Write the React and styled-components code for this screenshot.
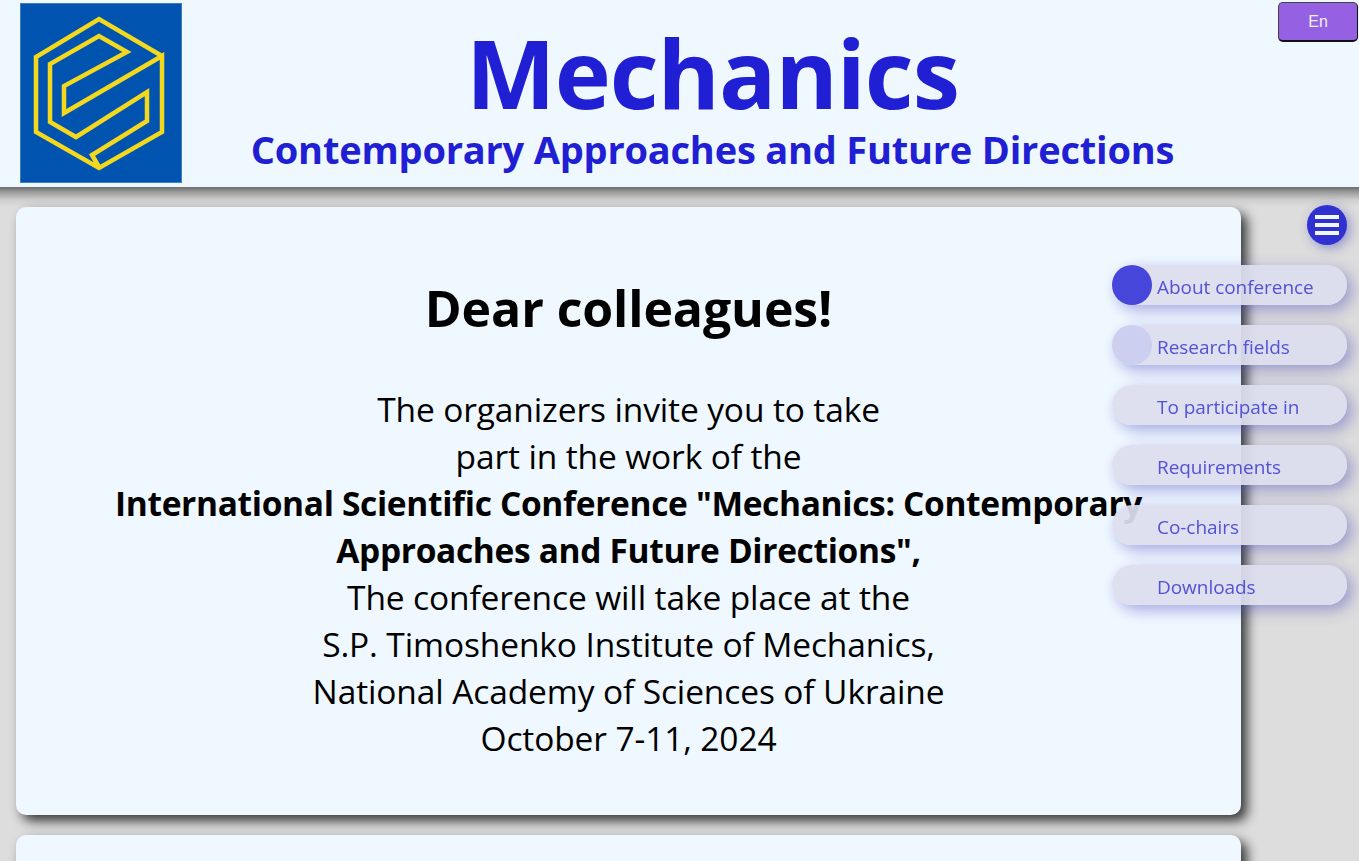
import styled, { createGlobalStyle } from "styled-components"

const Global = createGlobalStyle`
    html, body {
        margin: 0;
        height: 100%;
        overflow: hidden;
        background: #dddddd;
        font-family: "Open Sans", "Noto Sans", sans-serif;
    }
`
const Header = styled.header`
    position: relative;
    z-index: 2;
    display: flex;
    height: 187px;
    padding: 3px 0 0 20px;
    box-sizing: border-box;
    background: #f0f8ff;
    &::after {
        content: "";
        position: absolute;
        top: 100%;
        left: 0;
        right: 0;
        height: 20px;
        background: linear-gradient(#6a6c6e, #9a9a9a 25%, #cfcfcf 65%, #dddddd);
    }
`
const LogoFrame = styled.div`
    flex: none;
    width: 162px;
    height: 180px;
    overflow: hidden;
    background: #0054b0;
    box-shadow: inset 0 0 0 1px #3f7fc0;
`
const Logo = styled.svg`
    display: block;
    width: 100%;
    height: 100%;
    filter: blur(0.4px);
`
const Titles = styled.div`
    flex: 1;
    display: flex;
    flex-direction: column;
    align-items: center;
    padding-right: 116px;
    color: #211fd3;
    font-weight: 700;
    white-space: nowrap;
`
const Title = styled.h1`
    margin: 0;
    padding-top: 15px;
    font-size: 95px;
    line-height: 109px;
    letter-spacing: -1px;
`
const Subtitle = styled.h2`
    margin: 0;
    font-size: 38px;
    line-height: 44px;
    letter-spacing: -0.2px;
`
const LangButton = styled.button`
    position: absolute;
    top: 2px;
    right: 1px;
    width: 80px;
    height: 40px;
    border: 1px solid #444;
    border-right-color: #111;
    border-bottom: 2px solid #111;
    border-radius: 5px;
    background: #9561e2;
    color: #f0f0f0;
    font-family: "Liberation Sans", sans-serif;
    font-size: 16px;
`
const Content = styled.main`
    position: relative;
    z-index: 2;
    display: flex;
    flex-direction: column;
    gap: 20px;
    padding: 20px 118px 0 16px;
`
const Card = styled.section`
    min-height: ${props => props.height || "auto"};
    padding: 66px 20px 0;
    box-sizing: border-box;
    border-radius: 10px;
    background: #f0f8ff;
    box-shadow: 6px 6px 12px rgba(0, 0, 0, 0.75);
    text-align: center;
`
const Heading = styled.h2`
    margin: 0 0 43px;
    font-size: 50px;
    line-height: 70px;
    letter-spacing: -0.1px;
    color: #000;
`
const Body = styled.p`
    margin: 0;
    font-size: 33.5px;
    line-height: 47px;
    letter-spacing: -0.12px;
    color: #000;

    strong {
        letter-spacing: -0.33px;
    }
`
const Menu = styled.nav`
    position: fixed;
    z-index: 3;
    top: 205px;
    right: 12px;
    display: flex;
    flex-direction: column;
    align-items: flex-end;
    gap: 20px;
`
const Burger = styled.button`
    display: flex;
    flex-direction: column;
    justify-content: center;
    gap: 4px;
    width: 40px;
    height: 40px;
    padding: 0 8px;
    border: none;
    border-radius: 50%;
    background: #3131d2;
    box-shadow: 3px 3px 12px rgba(50, 50, 180, 0.45);

    span {
        height: 4px;
        background: #f0f8ff;
    }
`
const Pill = styled.a`
    position: relative;
    display: block;
    width: 235px;
    height: 40px;
    padding-left: 45px;
    box-sizing: border-box;
    border-radius: 20px;
    background: rgba(221, 222, 238, 0.93);
    box-shadow: 5px 5px 15px rgba(50, 50, 180, 0.4);
    color: #5252d6;
    font-size: 19px;
    line-height: 44px;
    letter-spacing: -0.05px;
    white-space: nowrap;

    &::before {
        content: "";
        display: ${props => props.dot ? "block" : "none"};
        position: absolute;
        top: 0;
        left: 0;
        width: 40px;
        height: 40px;
        border-radius: 50%;
        background: ${props => props.dot};
    }
`

const menuItems = [
    { label: "About conference", dot: "#4646da" },
    { label: "Research fields", dot: "#cdcff0" },
    { label: "To participate in" },
    { label: "Requirements" },
    { label: "Co-chairs" },
    { label: "Downloads" },
]

const App = () => {
    return (
        <>
            <Global />
            <Header>
                <LogoFrame>
                    <Logo viewBox="20 3 162 180" aria-label="logo">
                        <path
                            d="M162 56 L99 19 L36 57 V132 L99 168 L162 132 V56 L64 113 V86 L127 52 L99 36 L50 64 V122 L76 137 L147 92 V121 L92 155 L99 167"
                            fill="none"
                            stroke="#f4d81e"
                            strokeWidth="4.5"
                        />
                    </Logo>
                </LogoFrame>
                <Titles>
                    <Title>Mechanics</Title>
                    <Subtitle>Contemporary Approaches and Future Directions</Subtitle>
                </Titles>
                <LangButton>En</LangButton>
            </Header>
            <Content>
                <Card height="608px">
                    <Heading>Dear colleagues!</Heading>
                    <Body>
                        The organizers invite you to take<br />
                        part in the work of the<br />
                        <strong>International Scientific Conference "Mechanics: Contemporary<br />
                        Approaches and Future Directions",</strong><br />
                        The conference will take place at the<br />
                        S.P. Timoshenko Institute of Mechanics,<br />
                        National Academy of Sciences of Ukraine<br />
                        October 7-11, 2024
                    </Body>
                </Card>
                <Card height="400px" />
            </Content>
            <Menu>
                <Burger aria-label="menu"><span /><span /><span /></Burger>
                {menuItems.map(item => (
                    <Pill key={item.label} dot={item.dot}>{item.label}</Pill>
                ))}
            </Menu>
        </>
    )
}

export default App
